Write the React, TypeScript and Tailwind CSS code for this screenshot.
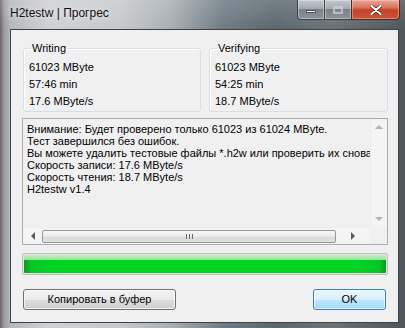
import React from "react";

const FONT = "font-['Segoe_UI','Liberation_Sans','Noto_Sans',sans-serif]";

const LOG_LINES = [
  "Внимание: Будет проверено только 61023 из 61024 MByte.",
  "Тест завершился без ошибок.",
  "Вы можете удалить тестовые файлы *.h2w или проверить их снова.",
  "Скорость записи: 17.6 MByte/s",
  "Скорость чтения: 18.7 MByte/s",
  "H2testw v1.4",
];

const Group = ({ title, lines, className }: { title: string; lines: string[]; className: string }) => (
  <fieldset className={`border border-[#d5dfe5] rounded-[3px] shadow-[inset_1px_1px_0_#fff] pl-[5px] pb-[3px] ${className}`}>
    <legend className="ml-[2px] px-[1px] text-[11px] leading-[13px] text-black">{title}</legend>
    <div className="pt-[4px] text-[11px] leading-[17px] text-black">
      {lines.map((l) => (
        <div key={l}>{l}</div>
      ))}
    </div>
  </fieldset>
);

const Arrow = ({ dir }: { dir: "up" | "down" | "left" | "right" }) => {
  const pts = {
    up: "0,4 4,0 8,4",
    down: "0,0 8,0 4,4",
    left: "4,0 4,8 0,4",
    right: "0,0 0,8 4,4",
  }[dir];
  const vert = dir === "up" || dir === "down";
  return (
    <svg width={vert ? 8 : 4} height={vert ? 4 : 8} viewBox={vert ? "0 0 8 4" : "0 0 4 8"}>
      <polygon points={pts} fill={vert ? "#b4b4b4" : "#5a5a5a"} />
    </svg>
  );
};

const WinButtons = () => (
  <div className="flex h-[20px] mt-0">
    <div className="w-[28px] h-full border border-[#3b4248] border-t-0 rounded-bl-[4px] bg-[linear-gradient(180deg,#c3c8cc_0%,#a4abb1_45%,#7a838a_50%,#8b9399_100%)] shadow-[inset_0_0_0_1px_rgba(255,255,255,0.35)] flex items-center justify-center">
      <div className="w-[10px] h-[3px] mt-[4px] bg-white border border-[#555]" />
    </div>
    <div className="w-[26px] h-full border-y border-[#3b4248] border-t-0 bg-[linear-gradient(180deg,#c3c8cc_0%,#a4abb1_45%,#7a838a_50%,#8b9399_100%)] shadow-[inset_0_0_0_1px_rgba(255,255,255,0.35)] flex items-center justify-center">
      <div className="w-[10px] h-[8px] border-[2px] border-[#c9cdd0] border-t-[3px] opacity-80" />
    </div>
    <div className="w-[49px] h-full border border-[#5a2418] border-t-0 rounded-br-[4px] bg-[linear-gradient(180deg,#e9a99a_0%,#d7745d_40%,#c2452b_52%,#c9543a_100%)] shadow-[inset_0_0_0_1px_rgba(255,220,210,0.4)] flex items-center justify-center">
      <svg width="12" height="10" viewBox="0 0 12 10">
        <path d="M1.5 1 L10.5 9 M10.5 1 L1.5 9" stroke="#5c1f12" strokeWidth="3.6" strokeLinecap="round" />
        <path d="M1.5 1 L10.5 9 M10.5 1 L1.5 9" stroke="#ffffff" strokeWidth="2.2" strokeLinecap="round" />
      </svg>
    </div>
  </div>
);

export default function App() {
  return (
    <div
      className={`${FONT} w-[405px] h-[328px] overflow-hidden flex flex-col bg-[linear-gradient(90deg,#6e6266_0%,#9a9a9c_1%,#b5b7ba_2.5%,#cfd1d4_12%,#c6c8cb_30%,#a9b0b5_42%,#6f7b84_55%,#5c6870_68%,#6a7278_82%,#4f565b_100%)]`}
    >
      {/* title bar */}
      <div className="h-[29px] flex shrink-0 bg-[linear-gradient(180deg,rgba(255,255,255,0.15),rgba(255,255,255,0))]">
        <div className="pl-[10px] pt-[5px] text-[12px] leading-[16px] text-[#111] [text-shadow:0_0_6px_rgba(255,255,255,0.9)]">
          H2testw | Прогрес
        </div>
        <div className="ml-auto mr-[5px]">
          <WinButtons />
        </div>
      </div>

      <div className="flex flex-1 min-h-0">
        {/* client area */}
        <div className="ml-[10px] w-[389px] h-[294px] border border-[#3d4246] bg-[#f0f0f0] flex flex-col text-black">
          <div className="flex gap-[8px] ml-[12px] mt-[12px]">
            <Group title="Writing" lines={["61023 MByte", "57:46 min", "17.6 MByte/s"]} className="w-[178px] h-[70px]" />
            <Group title="Verifying" lines={["61023 MByte", "54:25 min", "18.7 MByte/s"]} className="w-[179px] h-[70px]" />
          </div>

          {/* log box */}
          <div className="ml-[11px] mt-[6px] w-[366px] h-[127px] border border-[#abadb3] border-t-[#a5acb5] bg-[#f0f0f0] flex flex-col">
            <div className="flex flex-1 min-h-0">
              <div className="flex-1 min-w-0 overflow-hidden pl-[4px] pt-[4px] text-[11px] leading-[12px] whitespace-nowrap">
                {LOG_LINES.map((l) => (
                  <div key={l}>{l}</div>
                ))}
              </div>
              <div className="w-[17px] bg-[#f4f4f4] border-l border-[#ececec] flex flex-col items-center justify-between py-[6px]">
                <Arrow dir="up" />
                <Arrow dir="down" />
              </div>
            </div>
            <div className="flex h-[17px]">
              <div className="flex-1 flex items-center bg-[#f4f4f4] border-t border-[#ececec]">
                <div className="w-[19px] flex justify-center">
                  <Arrow dir="left" />
                </div>
                <div className="w-[294px] h-[13px] rounded-[2px] border border-[#979797] bg-[linear-gradient(180deg,#f6f6f6_0%,#eaeaea_50%,#d9d9d9_51%,#e2e2e2_100%)] flex items-center justify-center gap-[2px]">
                  <div className="w-px h-[5px] bg-[#6b6b6b]" />
                  <div className="w-px h-[5px] bg-[#6b6b6b]" />
                  <div className="w-px h-[5px] bg-[#6b6b6b]" />
                </div>
                <div className="flex-1 flex justify-center">
                  <Arrow dir="right" />
                </div>
              </div>
              <div className="w-[17px] bg-[#f0f0f0]" />
            </div>
          </div>

          {/* progress */}
          <div className="ml-[11px] mt-[8px] w-[366px] h-[22px] rounded-[2px] border border-[#bcbcbc] bg-[#e6e6e6] p-px">
            <div className="w-full h-full rounded-[1px] bg-[linear-gradient(90deg,#0a9b1e_0%,#07c626_2%,#00d423_8%,#00d423_92%,#07c626_98%,#0a9b1e_100%)] flex flex-col">
              <div className="h-[5px] bg-[linear-gradient(180deg,#d6f3d4,#a7e6a6)] opacity-90" />
            </div>
          </div>

          {/* buttons */}
          <div className="flex justify-between ml-[12px] mr-[12px] mt-[14px]">
            <button className="w-[153px] h-[21px] rounded-[3px] border border-[#707070] bg-[linear-gradient(180deg,#f2f2f2_0%,#ebebeb_50%,#dddddd_51%,#cfcfcf_100%)] shadow-[inset_0_0_0_1px_rgba(255,255,255,0.7)] text-[11px] leading-[19px] text-black">
              Копировать в буфер
            </button>
            <button className="w-[73px] h-[21px] rounded-[3px] border border-[#3c7fb1] bg-[linear-gradient(180deg,#eaf6fd_0%,#d9f0fc_50%,#bee6fd_51%,#a7d9f5_100%)] shadow-[inset_0_0_0_1px_rgba(255,255,255,0.6)] text-[11px] leading-[19px] text-black">
              OK
            </button>
          </div>
        </div>
      </div>
    </div>
  );
}
